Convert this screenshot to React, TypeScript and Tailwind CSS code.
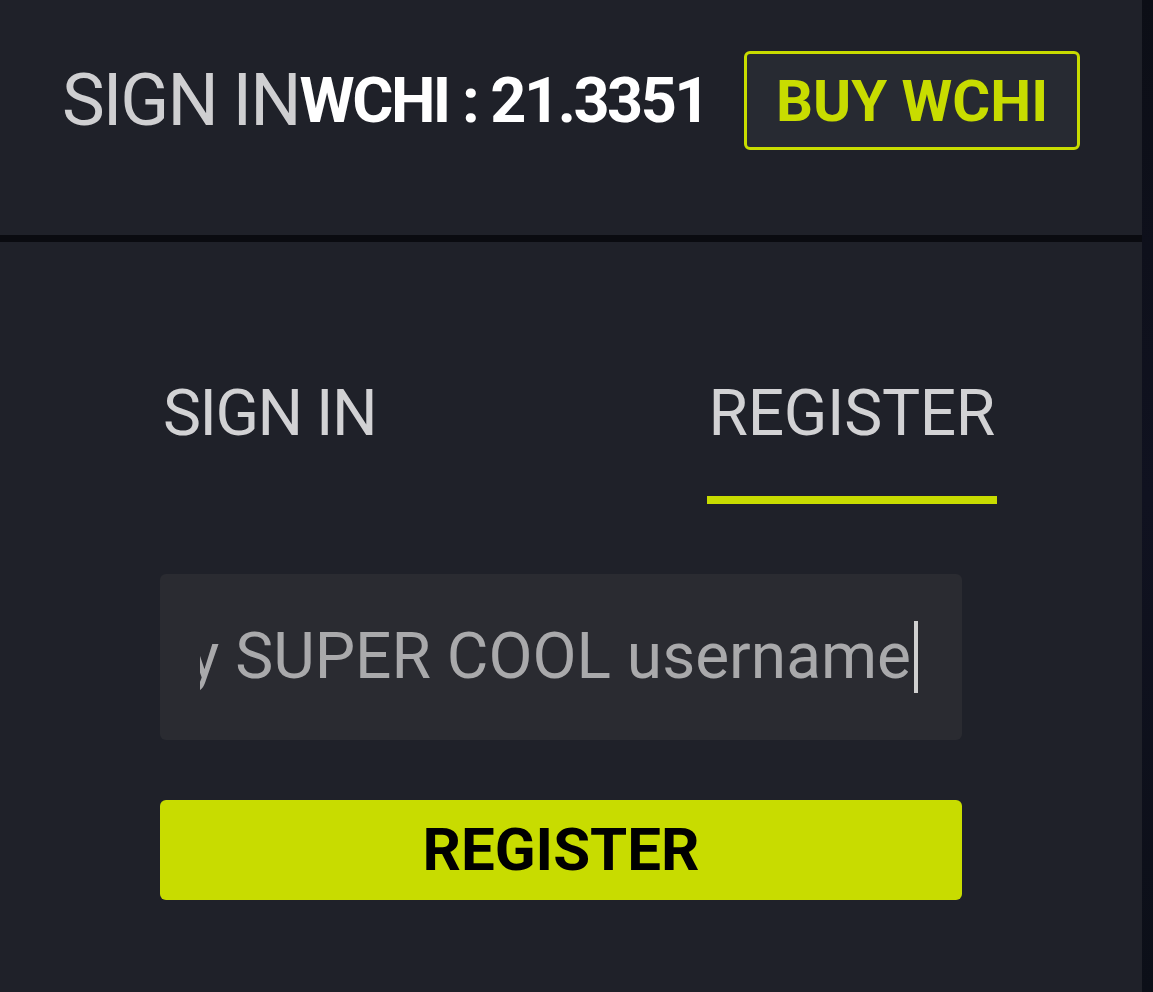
import React from "react";

export default function App() {
  return (
    <div
      className="flex w-[1153px] h-[992px] bg-[#0b0d14] overflow-hidden"
      style={{ fontFamily: "Roboto, 'Liberation Sans', sans-serif" }}
    >
      <div className="flex flex-col w-[1142px] h-full bg-[#1f2129]">
        {/* Header */}
        <div className="flex items-center h-[235px] pb-[34px] pl-[62px]">
          <span className="text-[72px] leading-none text-[#cfcfd1] tracking-[-2px]">SIGN IN</span>
          <span className="text-[63px] leading-none font-bold text-white tracking-[-2.5px]">
            WCHI : 21.3351
          </span>
          <button className="ml-[36px] h-[99px] w-[336px] flex items-center justify-center rounded-[6px] border-[3px] border-[#c8dc00] bg-[#272a32] text-[58px] leading-none font-bold text-[#c8dc00]">
            BUY WCHI
          </button>
        </div>
        <div className="h-[7px] bg-[#0a0b10]" />

        {/* Body */}
        <div className="flex flex-col pl-[160px] pt-[140px]">
          <div className="flex justify-between w-[837px]">
            <div className="flex flex-col items-center px-[3px]">
              <span className="text-[64px] leading-none text-[#d2d2d4] tracking-[-1.5px]">SIGN IN</span>
            </div>
            <div className="flex flex-col items-stretch">
              <span className="text-[64px] leading-none text-[#d2d2d4] px-[2px] tracking-[-0.3px]">REGISTER</span>
              <div className="mt-[50px] h-[8px] bg-[#c8dc00]" />
            </div>
          </div>

          <div className="mt-[70px] w-[802px] h-[166px] rounded-[6px] bg-[#2a2b31] flex items-center pl-[40px] pr-[44px]">
            <div className="flex-1 flex justify-end items-center overflow-hidden whitespace-nowrap">
              <span className="shrink-0 text-[64px] leading-none text-[#a9a9ab] tracking-[0px]">
                my SUPER COOL username
              </span>
              <span className="shrink-0 ml-[3px] inline-block w-[4px] h-[72px] bg-[#d0d0d0]" />
            </div>
          </div>

          <button className="mt-[60px] w-[802px] h-[100px] rounded-[6px] bg-[#c8dc00] flex items-center justify-center text-[60px] leading-none font-bold text-black">
            REGISTER
          </button>
        </div>
      </div>
      <div className="flex-1 bg-gradient-to-b from-[#0c0e16] via-[#101220] to-[#0c0f18]" />
    </div>
  );
}
